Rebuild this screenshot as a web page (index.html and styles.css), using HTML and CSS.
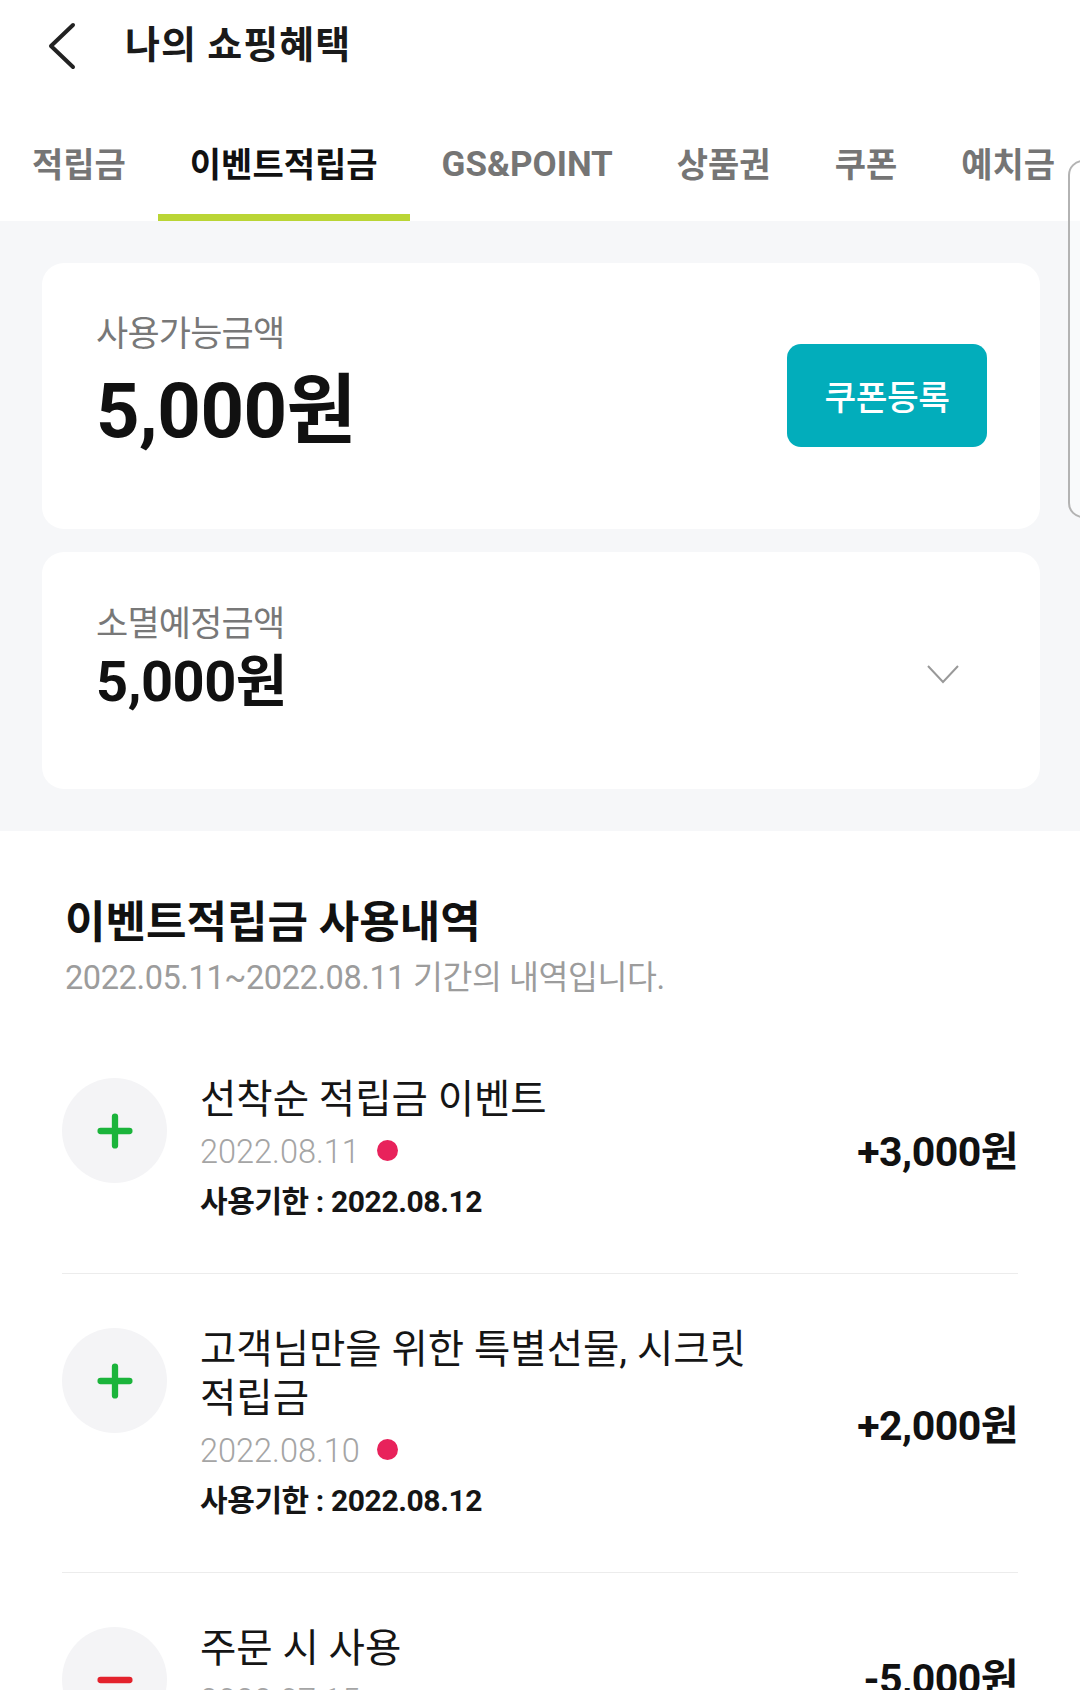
FILE: index.html
```html
<!DOCTYPE html>
<html lang="ko">
<head>
<meta charset="utf-8">
<title>나의 쇼핑혜택</title>
<link rel="stylesheet" href="styles.css">
</head>
<body>
<div class="page">
  <header class="header">
    <svg class="back" viewBox="0 0 30 48" width="30" height="48" aria-hidden="true">
      <path d="M26 3 L4 24 L26 45" fill="none" stroke="#222" stroke-width="4" stroke-linecap="round" stroke-linejoin="round"/>
    </svg>
    <h1 class="title">나의 쇼핑혜택</h1>
  </header>

  <nav class="tabs">
    <div class="tab">적립금</div>
    <div class="tab active">이벤트적립금</div>
    <div class="tab latin">GS&amp;POINT</div>
    <div class="tab">상품권</div>
    <div class="tab">쿠폰</div>
    <div class="tab">예치금</div>
  </nav>

  <section class="summary">
    <div class="card card-main">
      <div class="card-text">
        <div class="label">사용가능금액</div>
        <div class="amount-big">5,000원</div>
      </div>
      <button class="btn-coupon">쿠폰등록</button>
    </div>
    <div class="card card-expire">
      <div class="card-text">
        <div class="label">소멸예정금액</div>
        <div class="amount-mid">5,000원</div>
      </div>
      <svg class="chev-down" viewBox="0 0 34 22" width="34" height="22" aria-hidden="true">
        <path d="M2 3 L17 19 L32 3" fill="none" stroke="#999" stroke-width="2"/>
      </svg>
    </div>
  </section>

  <section class="history">
    <h2 class="history-title">이벤트적립금 사용내역</h2>
    <p class="history-sub">2022.05.11~2022.08.11 기간의 내역입니다.</p>

    <ul class="list">
      <li class="item">
        <div class="item-left">
          <div class="icon-circle">
            <svg viewBox="0 0 40 40" width="40" height="40" aria-hidden="true">
              <path d="M20 4 V36 M4 20 H36" stroke="#1bb43b" stroke-width="7" stroke-linecap="round"/>
            </svg>
          </div>
          <div class="item-text">
            <div class="item-title">선착순 적립금 이벤트</div>
            <div class="item-date">2022.08.11 <span class="dot"></span></div>
            <div class="item-limit">사용기한 : 2022.08.12</div>
          </div>
        </div>
        <div class="item-amount">+3,000원</div>
      </li>
      <li class="item">
        <div class="item-left">
          <div class="icon-circle">
            <svg viewBox="0 0 40 40" width="40" height="40" aria-hidden="true">
              <path d="M20 4 V36 M4 20 H36" stroke="#1bb43b" stroke-width="7" stroke-linecap="round"/>
            </svg>
          </div>
          <div class="item-text">
            <div class="item-title">고객님만을 위한 특별선물, 시크릿<br>적립금</div>
            <div class="item-date">2022.08.10 <span class="dot"></span></div>
            <div class="item-limit">사용기한 : 2022.08.12</div>
          </div>
        </div>
        <div class="item-amount">+2,000원</div>
      </li>
      <li class="item">
        <div class="item-left">
          <div class="icon-circle">
            <svg viewBox="0 0 40 40" width="40" height="40" aria-hidden="true">
              <path d="M4 20 H36" stroke="#e3222c" stroke-width="7" stroke-linecap="round"/>
            </svg>
          </div>
          <div class="item-text">
            <div class="item-title">주문 시 사용</div>
            <div class="item-date">2022.07.15</div>
          </div>
        </div>
        <div class="item-amount">-5,000원</div>
      </li>
    </ul>
  </section>

  <div class="edge-handle"></div>
</div>
</body>
</html>
```

FILE: styles.css
```css
* { box-sizing: border-box; }

html, body {
  margin: 0;
  padding: 0;
  background: #fff;
}

body {
  font-family: "Roboto", "Noto Sans CJK KR", sans-serif;
  color: #111;
  width: 1080px;
  height: 1690px;
  overflow: hidden;
}

.page {
  position: relative;
  width: 1080px;
}

/* Header */
.header {
  height: 90px;
  display: flex;
  align-items: center;
  padding-left: 47px;
}

.back {
  display: block;
  margin-top: 1px;
}

.title {
  margin: 0 0 0 48px;
  font-size: 38px;
  line-height: 50px;
  font-weight: 700;
  color: #1a1a1a;
  letter-spacing: 1px;
}

/* Tabs */
.tabs {
  display: flex;
  height: 131px;
  background: #fff;
  white-space: nowrap;
}

.tab {
  height: 131px;
  padding: 25px 32px 0 32px;
  border-bottom: 7px solid transparent;
  display: flex;
  align-items: center;
  font-size: 34px;
  font-weight: 700;
  color: #757575;
  line-height: 40px;
}

.tab.active {
  color: #111;
  border-bottom-color: #bad535;
}

.tab.latin {
  font-size: 35px;
  letter-spacing: 0;
}

/* Summary cards */
.summary {
  background: #f6f7f9;
  padding: 42px 40px 42px 42px;
  display: flex;
  flex-direction: column;
  gap: 23px;
}

.card {
  background: #fff;
  border-radius: 22px;
  display: flex;
  align-items: flex-start;
  justify-content: space-between;
}

.card-main {
  height: 266px;
  padding: 50px 53px 0 54px;
}

.card-expire {
  height: 237px;
  padding: 51px 80px 0 54px;
}

.label {
  font-size: 35px;
  line-height: 44px;
  color: #787878;
  letter-spacing: -0.8px;
}

.amount-big {
  margin-top: 14px;
  font-size: 76px;
  line-height: 80px;
  font-weight: 700;
  color: #111;
  letter-spacing: -0.5px;
}

.amount-mid {
  margin-top: 3px;
  font-size: 56px;
  line-height: 64px;
  font-weight: 700;
  color: #111;
  letter-spacing: -0.5px;
}

.btn-coupon {
  align-self: center;
  margin-top: -52px;
  width: 200px;
  height: 103px;
  border: none;
  border-radius: 14px;
  background: #02adbb;
  color: #fff;
  font-family: "Noto Sans CJK KR", sans-serif;
  font-size: 34.5px;
  font-weight: 500;
  letter-spacing: -0.5px;
  padding: 0;
}

.chev-down {
  align-self: center;
  margin-top: -44px;
  display: block;
}

/* History */
.history {
  padding: 66px 62px 0 62px;
}

.history-title {
  margin: 0;
  padding-left: 3px;
  font-size: 44px;
  line-height: 52px;
  font-weight: 700;
  color: #111;
  letter-spacing: 0;
}

.history-sub {
  margin: 7px 0 0 0;
  padding-left: 3px;
  font-size: 32.5px;
  line-height: 44px;
  color: #9c9c9c;
  letter-spacing: -0.4px;
}

.list {
  list-style: none;
  margin: 24px 0 0 0;
  padding: 0;
}

.item {
  display: flex;
  align-items: center;
  justify-content: space-between;
  padding: 51px 0 47px 0;
  border-bottom: 1px solid #ececec;
}

.item-left {
  display: flex;
  align-items: flex-start;
  gap: 33px;
}

.icon-circle {
  flex: none;
  width: 105px;
  height: 105px;
  margin-top: 3px;
  border-radius: 50%;
  background: #f4f4f6;
  display: flex;
  align-items: center;
  justify-content: center;
}

.icon-circle svg {
  display: block;
  width: 36px;
  height: 36px;
}

.item-text {
  display: flex;
  flex-direction: column;
}

.item-title {
  font-size: 39.5px;
  line-height: 49px;
  color: #151515;
  letter-spacing: 0;
}

.item-date {
  margin-top: 4px;
  font-size: 32.5px;
  line-height: 49px;
  font-weight: 300;
  color: #a5a5a5;
  display: flex;
  align-items: center;
  gap: 17px;
}

.dot {
  display: inline-block;
  width: 21px;
  height: 21px;
  border-radius: 50%;
  background: #e8225b;
  margin-top: -4px;
}

.item-limit {
  font-size: 30px;
  line-height: 49px;
  font-weight: 700;
  color: #151515;
  letter-spacing: -0.4px;
}

.item-amount {
  font-size: 41px;
  font-weight: 700;
  color: #111;
  letter-spacing: -0.5px;
  white-space: nowrap;
  margin-top: -6px;
}

/* Edge panel handle overlaying the right edge */
.edge-handle {
  position: absolute;
  left: 1068px;
  top: 160px;
  width: 30px;
  height: 358px;
  border: 2px solid #b3b3b3;
  border-radius: 16px;
  background: rgba(255, 255, 255, 0.35);
}
```
